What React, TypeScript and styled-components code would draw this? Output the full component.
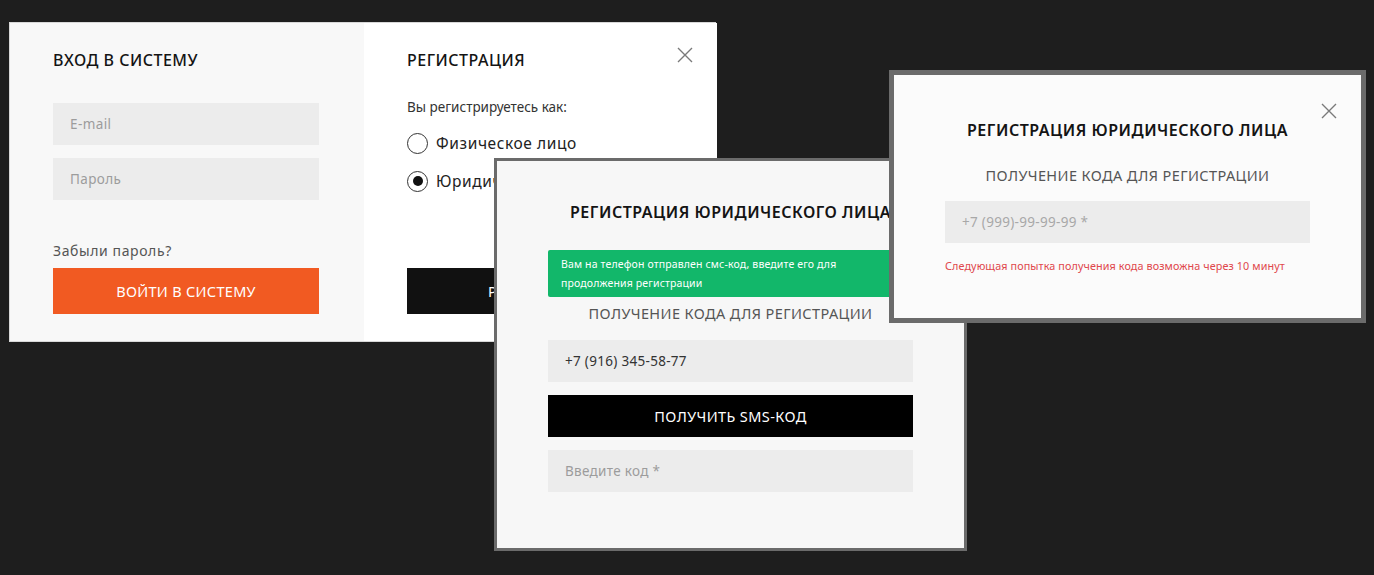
import React from "react";
import styled, { createGlobalStyle } from "styled-components";

const GlobalStyle = createGlobalStyle`
  html, body {
    margin: 0;
    padding: 0;
    background: #1e1e1e;
  }
  * {
    box-sizing: border-box;
  }
  body {
    font-family: "Noto Sans", "Open Sans", sans-serif;
  }
`;

const Canvas = styled.div`
  position: relative;
  width: 1374px;
  height: 575px;
  overflow: hidden;
  background: #1e1e1e;
`;

/* each screenshot is a window on a free canvas */
const Shot = styled.div<{ $x: number; $y: number; $w: number; $h: number; $z: number }>`
  position: absolute;
  left: ${(p) => p.$x}px;
  top: ${(p) => p.$y}px;
  width: ${(p) => p.$w}px;
  height: ${(p) => p.$h}px;
  z-index: ${(p) => p.$z};
`;

const AuthPanel = styled.div`
  display: grid;
  grid-template-columns: 354px 353px;
  height: 100%;
  border: 1px solid #d8d8d8;
`;

const Column = styled.div<{ $bg: string }>`
  position: relative;
  display: flex;
  flex-direction: column;
  padding: 27px 0 0 43px;
  background: ${(p) => p.$bg};
`;

const Title = styled.div`
  font-size: 16px;
  line-height: 20px;
  font-weight: 500;
  color: #141414;
  letter-spacing: 0.5px;
  text-transform: uppercase;
  white-space: nowrap;
`;

const Field = styled.div<{ $mt: number; $bg?: string; $color?: string }>`
  width: 266px;
  height: 42px;
  margin-top: ${(p) => p.$mt}px;
  padding-left: 17px;
  display: flex;
  align-items: center;
  background: ${(p) => p.$bg || "#ececec"};
  color: ${(p) => p.$color || "#9c9c9c"};
  font-size: 13.5px;
  letter-spacing: 0.4px;
`;

const WideField = styled(Field)`
  width: 365px;
  letter-spacing: 0.3px;
`;

const Link = styled.div`
  margin-top: 41px;
  font-size: 14px;
  line-height: 20px;
  letter-spacing: 0.6px;
  color: #555;
`;

const Button = styled.div<{ $bg: string; $mt: number; $h: number }>`
  margin-top: ${(p) => p.$mt}px;
  width: 266px;
  height: ${(p) => p.$h}px;
  display: flex;
  align-items: center;
  justify-content: center;
  background: ${(p) => p.$bg};
  color: #fff;
  font-size: 14.5px;
  letter-spacing: 0.3px;
  text-transform: uppercase;
`;

const WideButton = styled(Button)`
  width: 365px;
  letter-spacing: 0.4px;
`;

const Lead = styled.div`
  margin-top: 27px;
  font-size: 13.5px;
  line-height: 20px;
  color: #333;
`;

const RadioRow = styled.div<{ $mt: number }>`
  margin-top: ${(p) => p.$mt}px;
  display: flex;
  align-items: center;
  gap: 8px;
  height: 22px;
  font-size: 15.5px;
  letter-spacing: 0.6px;
  color: #222;
  white-space: nowrap;
`;

const RadioDot = styled.span<{ $on?: boolean }>`
  flex: none;
  width: 21px;
  height: 21px;
  border-radius: 50%;
  border: 1.5px solid #333;
  background: #fff;
  display: flex;
  align-items: center;
  justify-content: center;
  &::after {
    content: "";
    width: 10px;
    height: 10px;
    border-radius: 50%;
    background: ${(p) => (p.$on ? "#111" : "transparent")};
  }
`;

const Close = styled.div<{ $right: number; $top: number }>`
  position: absolute;
  right: ${(p) => p.$right}px;
  top: ${(p) => p.$top}px;
  width: 16px;
  height: 16px;
  display: flex;
`;

const Modal = styled.div<{ $bw: number; $bg: string; $pt: number }>`
  position: relative;
  height: 100%;
  border: ${(p) => p.$bw}px solid #6b6b6b;
  background: ${(p) => p.$bg};
  display: flex;
  flex-direction: column;
  align-items: center;
  padding-top: ${(p) => p.$pt}px;
`;

const ModalTitle = styled(Title)`
  font-weight: 600;
  font-size: 16px;
  letter-spacing: 0.5px;
`;

const Subtitle = styled.div<{ $mt: number }>`
  margin-top: ${(p) => p.$mt}px;
  font-size: 14.5px;
  line-height: 20px;
  color: #555;
  letter-spacing: 0.4px;
  text-transform: uppercase;
`;

const Alert = styled.div`
  margin-top: 28px;
  width: 365px;
  height: 47px;
  padding: 5px 13px;
  background: #12b76a;
  color: #fff;
  font-size: 10.5px;
  line-height: 19px;
  letter-spacing: 0.15px;
  border-radius: 2px;
`;

const AlertLine = styled.span`
  display: block;
  white-space: nowrap;
`;

const ErrorText = styled.div`
  margin-top: 15px;
  width: 365px;
  font-size: 10.8px;
  line-height: 16px;
  letter-spacing: 0.1px;
  color: #e0474c;
  white-space: nowrap;
`;

const CloseIcon = () => (
  <svg width="16" height="16" viewBox="0 0 16 16">
    <path d="M1 1 L15 15 M15 1 L1 15" stroke="#7a7a7a" strokeWidth="1.4" fill="none" />
  </svg>
);

export default function App() {
  return (
    <>
      <GlobalStyle />
      <Canvas>
        <Shot $x={9} $y={22} $w={707} $h={320} $z={1}>
          <AuthPanel>
            <Column $bg="#f8f8f8">
              <Title>Вход в систему</Title>
              <Field $mt={33}>E-mail</Field>
              <Field $mt={13}>Пароль</Field>
              <Link>Забыли пароль?</Link>
              <Button $bg="#f15a22" $mt={7} $h={46}>
                Войти в систему
              </Button>
            </Column>
            <Column $bg="#ffffff">
              <Title>Регистрация</Title>
              <Close $right={24} $top={24}>
                <CloseIcon />
              </Close>
              <Lead>Вы регистрируетесь как:</Lead>
              <RadioRow $mt={15}>
                <RadioDot />
                Физическое лицо
              </RadioRow>
              <RadioRow $mt={16}>
                <RadioDot $on />
                Юридическое лицо
              </RadioRow>
              <Button $bg="#111111" $mt={76} $h={46}>
                Регистрация
              </Button>
            </Column>
          </AuthPanel>
        </Shot>

        <Shot $x={494} $y={158} $w={473} $h={393} $z={2}>
          <Modal $bw={3} $bg="#f7f7f7" $pt={41}>
            <ModalTitle>Регистрация юридического лица</ModalTitle>
            <Alert>
              <AlertLine>Вам на телефон отправлен смс-код, введите его для</AlertLine>
              <AlertLine>продолжения регистрации</AlertLine>
            </Alert>
            <Subtitle $mt={6}>Получение кода для регистрации</Subtitle>
            <WideField $mt={17} $color="#333">
              +7 (916) 345-58-77
            </WideField>
            <WideButton $bg="#000000" $mt={13} $h={42}>
              Получить SMS-код
            </WideButton>
            <WideField $mt={13}>Введите код *</WideField>
          </Modal>
        </Shot>

        <Shot $x={889} $y={70} $w={477} $h={253} $z={3}>
          <Modal $bw={5} $bg="#fbfbfb" $pt={45}>
            <Close $right={24} $top={28}>
              <CloseIcon />
            </Close>
            <ModalTitle>Регистрация юридического лица</ModalTitle>
            <Subtitle $mt={25}>Получение кода для регистрации</Subtitle>
            <WideField $mt={16} $color="#a8a8a8">
              +7 (999)-99-99-99 *
            </WideField>
            <ErrorText>Следующая попытка получения кода возможна через 10 минут</ErrorText>
          </Modal>
        </Shot>
      </Canvas>
    </>
  );
}
